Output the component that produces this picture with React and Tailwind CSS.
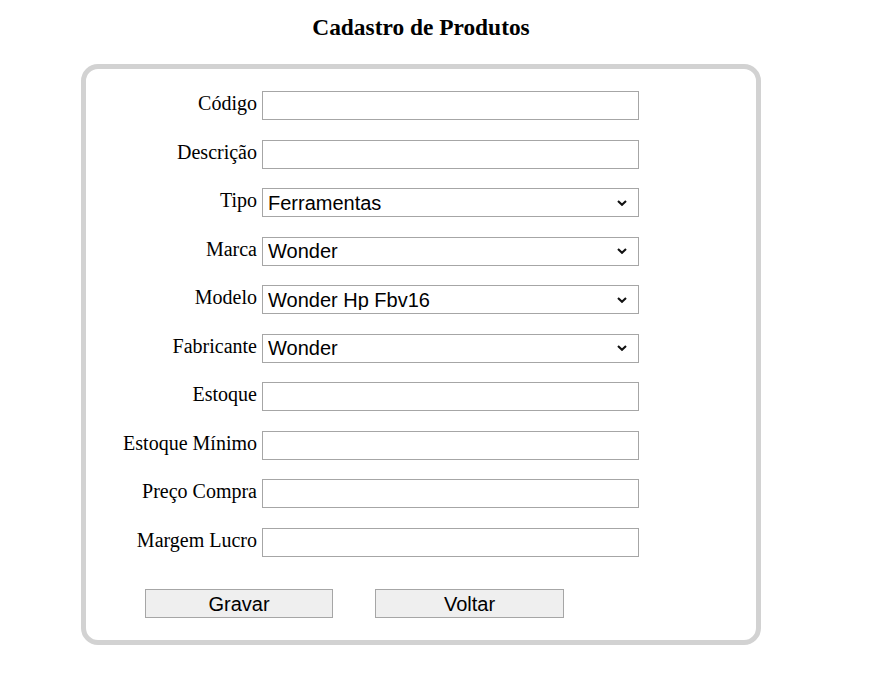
import React from "react";

const serif = "font-['Liberation_Serif','Times_New_Roman',serif]";
const sans = "font-['Liberation_Sans',Arial,sans-serif]";

function Chevron() {
  return (
    <svg
      className="pointer-events-none absolute right-[12px] top-1/2 -translate-y-1/2"
      width="10"
      height="7"
      viewBox="0 0 10 7"
    >
      <path d="M1 1.4 L5 5.2 L9 1.4" fill="none" stroke="#111" strokeWidth="2.1" />
    </svg>
  );
}

function Row({ label, type = "input", value, options }) {
  return (
    <div className="flex h-[29px] items-center">
      <label className={`-mt-[5px] w-[172px] pr-[1px] text-right text-[20px] leading-none text-black ${serif}`}>
        {label}
      </label>
      {type === "input" ? (
        <input
          type="text"
          className={`ml-[4px] h-[29px] w-[377px] border border-[#a6a6a6] bg-white px-[4px] text-[20px] text-black outline-none ${sans}`}
        />
      ) : (
        <div className="relative ml-[4px] h-[29px] w-[377px]">
          <select
            defaultValue={value}
            className={`h-[29px] w-full appearance-none border border-[#a6a6a6] bg-white pl-[5px] pr-[24px] text-[20px] leading-none text-black outline-none ${sans}`}
          >
            {options.map((o) => (
              <option key={o}>{o}</option>
            ))}
          </select>
          <Chevron />
        </div>
      )}
    </div>
  );
}

export default function App() {
  return (
    <div className="min-h-[689px] w-[881px] bg-white">
      <div className="flex w-[842px] flex-col items-center pt-[14px]">
        <h3 className={`h-[27px] text-[23.4px] font-bold leading-[27px] text-black ${serif}`}>
          Cadastro de Produtos
        </h3>
        <div className="mt-[23px] w-[680px] rounded-[17px] border-[5px] border-[#d2d2d2] bg-white pt-[22px] pb-[22px]">
          <div className="flex flex-col gap-y-[19.5px]">
            <Row label="Código" />
            <Row label="Descrição" />
            <Row label="Tipo" type="select" value="Ferramentas" options={["Ferramentas", "Eletrônicos", "Acessórios"]} />
            <Row label="Marca" type="select" value="Wonder" options={["Wonder", "Outra"]} />
            <Row label="Modelo" type="select" value="Wonder Hp Fbv16" options={["Wonder Hp Fbv16", "Outro"]} />
            <Row label="Fabricante" type="select" value="Wonder" options={["Wonder", "Outro"]} />
            <Row label="Estoque" />
            <Row label="Estoque Mínimo" />
            <Row label="Preço Compra" />
            <Row label="Margem Lucro" />
          </div>
          <div className="mt-[32.5px] flex gap-x-[42px] pl-[59px]">
            <button
              className={`h-[29px] w-[188px] border border-[#a6a6a6] bg-[#efefef] text-[20px] leading-none text-black ${sans}`}
            >
              Gravar
            </button>
            <button
              className={`h-[29px] w-[189px] border border-[#a6a6a6] bg-[#efefef] text-[20px] leading-none text-black ${sans}`}
            >
              Voltar
            </button>
          </div>
        </div>
      </div>
    </div>
  );
}
